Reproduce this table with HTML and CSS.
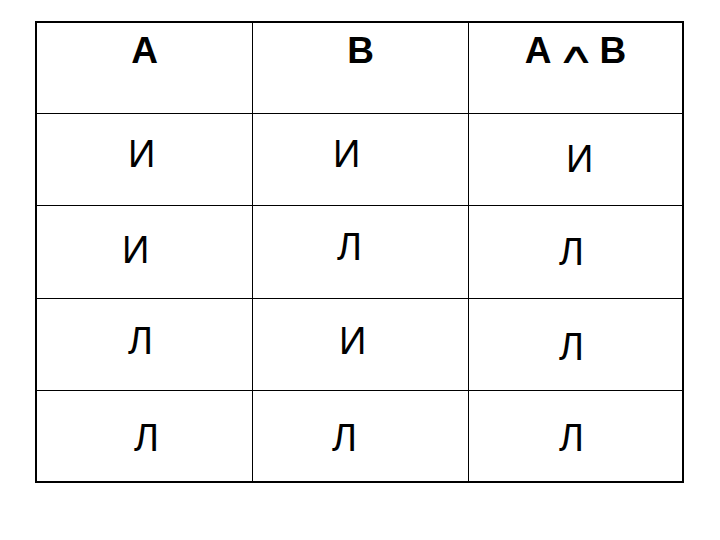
FILE: index.html
```html
<!DOCTYPE html>
<html lang="ru">
<head>
<meta charset="utf-8">
<title>Конъюнкция</title>
<link rel="stylesheet" href="styles.css">
</head>
<body>
<div class="truth-table">
  <div class="cell head">A</div>
  <div class="cell head">B</div>
  <div class="cell head">A<span class="op">∧</span>B</div>

  <div class="cell r1c1">И</div>
  <div class="cell r1c2">И</div>
  <div class="cell r1c3">И</div>

  <div class="cell r2c1">И</div>
  <div class="cell r2c2">Л</div>
  <div class="cell r2c3">Л</div>

  <div class="cell r3c1">Л</div>
  <div class="cell r3c2">И</div>
  <div class="cell r3c3">Л</div>

  <div class="cell r4c1">Л</div>
  <div class="cell r4c2">Л</div>
  <div class="cell r4c3">Л</div>
</div>
</body>
</html>
```

FILE: styles.css
```css
html, body {
  margin: 0;
  padding: 0;
  background: #ffffff;
}

body {
  font-family: "Liberation Sans", Arial, sans-serif;
  color: #000000;
}

.truth-table {
  margin: 21px 0 0 35px;
  width: 645px;
  border: 2px solid #000000;
  display: grid;
  grid-template-columns: 215px 215px 213px;
  grid-template-rows: 90px 91px 92px 91px 90px;
  gap: 1px;
  background: #000000;
}

.cell {
  background: #ffffff;
  font-size: 38px;
  line-height: 38px;
  white-space: nowrap;
  box-sizing: border-box;
}

.head {
  font-weight: bold;
  font-size: 37px;
  line-height: 37px;
  text-align: center;
  padding-top: 9px;
}

.op {
  display: inline-block;
  width: 48px;
  text-align: center;
  font-family: "DejaVu Sans", sans-serif;
  font-weight: normal;
  font-size: 28px;
  line-height: 0;
  transform: scale(1.9, 1);
}

.r1c1 { padding: 21px 0 0 91px; }
.r1c2 { padding: 21px 0 0 80px; }
.r1c3 { padding: 26px 0 0 97px; }

.r2c1 { padding: 25px 0 0 85px; }
.r2c2 { padding: 22px 0 0 84px; }
.r2c3 { padding: 27px 0 0 90px; }

.r3c1 { padding: 23px 0 0 91px; }
.r3c2 { padding: 23px 0 0 86px; }
.r3c3 { padding: 29px 0 0 90px; }

.r4c1 { padding: 28px 0 0 97px; }
.r4c2 { padding: 28px 0 0 79px; }
.r4c3 { padding: 28px 0 0 90px; }
```
